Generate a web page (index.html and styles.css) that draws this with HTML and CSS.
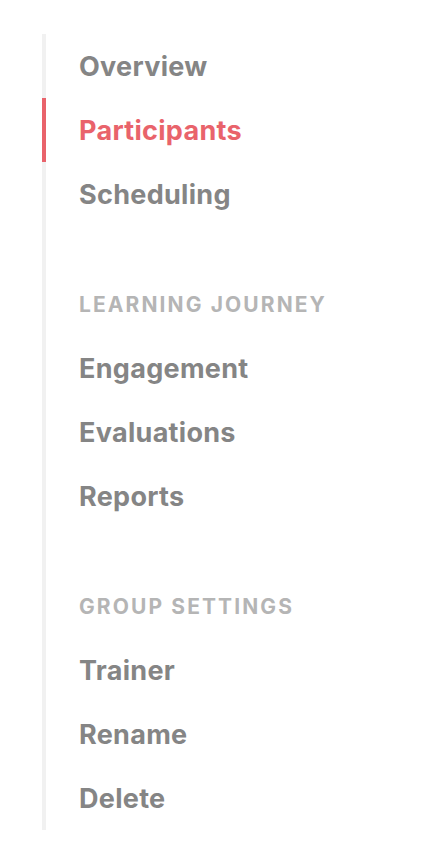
FILE: index.html
```html
<!DOCTYPE html>
<html lang="en">
<head>
<meta charset="utf-8">
<title>Group navigation</title>
<link rel="stylesheet" href="styles.css">
</head>
<body>
<nav class="sidenav">
  <ul class="nav-list">
    <li class="nav-item">Overview</li>
    <li class="nav-item is-active">Participants</li>
    <li class="nav-item">Scheduling</li>
  </ul>
  <div class="nav-heading">Learning Journey</div>
  <ul class="nav-list">
    <li class="nav-item">Engagement</li>
    <li class="nav-item">Evaluations</li>
    <li class="nav-item">Reports</li>
  </ul>
  <div class="nav-heading">Group Settings</div>
  <ul class="nav-list">
    <li class="nav-item">Trainer</li>
    <li class="nav-item">Rename</li>
    <li class="nav-item">Delete</li>
  </ul>
</nav>
</body>
</html>
```

FILE: styles.css
```css
html, body {
  margin: 0;
  padding: 0;
  background: #ffffff;
}

body {
  font-family: Inter, "Liberation Sans", sans-serif;
  padding: 34px 0 0 42px;
}

.sidenav {
  display: flex;
  flex-direction: column;
  width: 360px;
  border-left: 4px solid #f1f1f1;
}

.nav-list {
  list-style: none;
  margin: 0;
  padding: 0;
}

.nav-item {
  display: flex;
  align-items: center;
  height: 64px;
  margin-left: -4px;
  padding-left: 33px;
  border-left: 4px solid transparent;
  font-size: 27px;
  font-weight: 700;
  letter-spacing: 0.3px;
  color: #858585;
}

.nav-item.is-active {
  border-left-color: #e9636b;
  color: #e9636b;
}

.nav-heading {
  height: 24px;
  line-height: 24px;
  margin: 67px 0 19px;
  padding-left: 33px;
  font-size: 21px;
  font-weight: 700;
  letter-spacing: 2.1px;
  text-transform: uppercase;
  color: #b5b5b5;
  white-space: nowrap;
}
```
